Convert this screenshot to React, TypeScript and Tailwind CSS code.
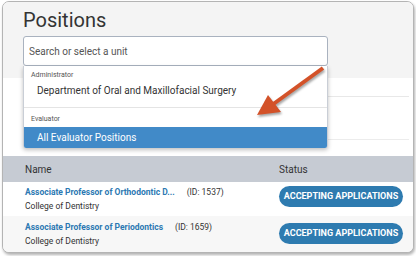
import React from 'react';

type Position = {
  title: string;
  id: string;
  unit: string;
  striped: boolean;
  textPad: string;
  badgePad: string;
};

const positions: Position[] = [
  {
    title: 'Associate Professor of Orthodontic D...',
    id: '(ID: 1537)',
    unit: 'College of Dentistry',
    striped: false,
    textPad: 'pt-[3px]',
    badgePad: 'pt-[4px]',
  },
  {
    title: 'Associate Professor of Periodontics',
    id: '(ID: 1659)',
    unit: 'College of Dentistry',
    striped: true,
    textPad: 'pt-[4px]',
    badgePad: 'pt-[7px]',
  },
];

const Arrow: React.FC = () => (
  <svg
    className="absolute left-0 top-0 pointer-events-none drop-shadow-[1px_2px_1px_rgba(0,0,0,0.35)]"
    width="416"
    height="256"
    viewBox="0 0 416 256"
  >
    <line x1="323" y1="68" x2="272" y2="105" stroke="#d35229" strokeWidth="4" />
    <polygon points="257,115 268,95 281,112" fill="#d35229" />
  </svg>
);

const App: React.FC = () => {
  return (
    <div className="relative w-[416px] h-[256px] bg-white font-['Roboto',sans-serif] text-[#333]">
      <div className="relative ml-[2px] pt-[1px] w-[412px]">
        <div className="relative h-[252px] border border-[#b4b4b4] rounded-[7px] overflow-hidden bg-white shadow-[1px_2px_3px_rgba(0,0,0,0.3)] flex flex-col">
          {/* header */}
          <div className="h-[76px] bg-[#f4f4f4] px-[20px] pt-[6px] shrink-0">
            <h1 className="text-[20px] leading-[24px] font-normal text-[#333]">Positions</h1>
            <div className="mt-[4px] w-[305px] h-[30px] border border-[#a9b2bf] rounded-[3px] bg-white flex items-center pl-[5px] text-[10px] text-[#555]">
              Search or select a unit
            </div>
          </div>

          {/* rows hidden behind the menu */}
          <div className="h-[19px] border-b border-[#e8e8e8] ml-[20px] mr-[4px] shrink-0" />
          <div className="h-[43px] border-b border-[#ececec] ml-[20px] mr-[4px] shrink-0" />
          <div className="h-[16px] shrink-0" />

          {/* table */}
          <div className="h-[26px] bg-[#c6cbd3] flex items-center text-[10px] text-[#333] shrink-0">
            <div className="w-[276px] pl-[22px]">Name</div>
            <div>Status</div>
          </div>
          {positions.map((p, i) => (
            <div
              key={p.id}
              className={`flex ${i === 0 ? 'h-[34px]' : 'flex-1'} ${p.striped ? 'bg-[#f7f7f7]' : 'bg-white'}`}
            >
              <div className={`w-[276px] pl-[22px] flex flex-col ${p.textPad}`}>
                <div className="h-[14px] flex items-center text-[8.5px]">
                  <span className="font-bold text-[#2b78b2]">{p.title}</span>
                  <span className="ml-[12px] text-[#333]">{p.id}</span>
                </div>
                <div className="h-[15px] flex items-center text-[8.5px] text-[#333]">{p.unit}</div>
              </div>
              <div className={p.badgePad}>
                <div className="w-[124px] h-[21px] rounded-full bg-[#2e7bb0] flex items-center justify-center text-[9px] font-bold text-white">
                  ACCEPTING APPLICATIONS
                </div>
              </div>
            </div>
          ))}

          {/* open dropdown */}
          <div className="absolute left-[20px] top-[64px] w-[305px] bg-white border-x border-[#c9ced6] rounded-b-[3px] shadow-[0_2px_4px_rgba(0,0,0,0.25)]">
            <div className="h-[14px] pt-[4px] pl-[7px] text-[7px] leading-[10px] text-[#555]">Administrator</div>
            <div className="h-[20px] flex items-center pl-[13px] text-[10px] text-[#333]">
              Department of Oral and Maxillofacial Surgery
            </div>
            <div className="mt-[7px] border-t border-[#e4e4e4]" />
            <div className="h-[19px] pt-[6px] pl-[7px] text-[7px] leading-[10px] text-[#555]">Evaluator</div>
            <div className="h-[21px] bg-[#418ac8] flex items-center pl-[13px] text-[10px] text-white rounded-b-[2px]">
              All Evaluator Positions
            </div>
          </div>
        </div>
      </div>
      <Arrow />
    </div>
  );
};

export default App;
